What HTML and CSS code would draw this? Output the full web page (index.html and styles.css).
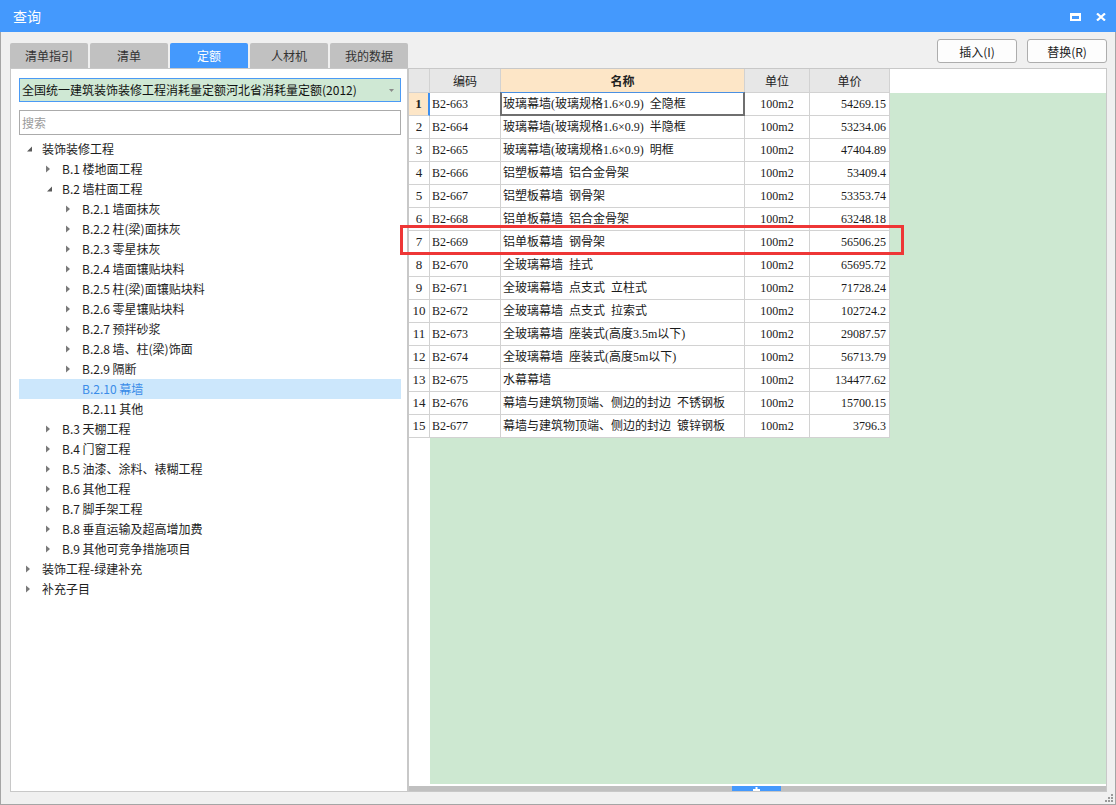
FILE: index.html
```html
<!DOCTYPE html>
<html lang="zh-CN">
<head>
<meta charset="utf-8">
<title>查询</title>
<link rel="stylesheet" href="styles.css">
</head>
<body>
<div class="window">
  <div class="titlebar">
    <span class="title">查询</span>
    <div class="title-controls">
      <svg class="ctl" width="11" height="8" viewBox="0 0 11 8"><path fill="#fff" fill-rule="evenodd" d="M0 0H11V8H0Z M2 3H9V6H2Z"/></svg>
      <svg class="ctl" width="10" height="8" viewBox="0 0 10 8"><path d="M1 0.5L9 7.5M9 0.5L1 7.5" stroke="#fff" stroke-width="2.2" fill="none"/></svg>
    </div>
  </div>
  <div class="content">
    <div class="left-col">
      <div class="tabs">
        <div class="tab">清单指引</div>
        <div class="tab">清单</div>
        <div class="tab active">定额</div>
        <div class="tab">人材机</div>
        <div class="tab">我的数据</div>
      </div>
      <div class="left-panel">
        <div class="select">
          <span>全国统一建筑装饰装修工程消耗量定额河北省消耗量定额(2012)</span>
          <svg width="5" height="3" viewBox="0 0 5 3"><path d="M0 0H5L2.5 3Z" fill="#8a8a8a"/></svg>
        </div>
        <div class="search">搜索</div>
        <ul class="tree">
          <li class="node l0"><span class="tg"><svg viewBox="0 0 6 8"><path class="ex" d="M6 1.5V6.5H1Z"/></svg></span>装饰装修工程</li>
          <li class="node l1"><span class="tg"><svg viewBox="0 0 6 8"><path class="co" d="M0 0.5L4 4L0 7.5Z"/></svg></span>B.1 楼地面工程</li>
          <li class="node l1"><span class="tg"><svg viewBox="0 0 6 8"><path class="ex" d="M6 1.5V6.5H1Z"/></svg></span>B.2 墙柱面工程</li>
          <li class="node l2"><span class="tg"><svg viewBox="0 0 6 8"><path class="co" d="M0 0.5L4 4L0 7.5Z"/></svg></span>B.2.1 墙面抹灰</li>
          <li class="node l2"><span class="tg"><svg viewBox="0 0 6 8"><path class="co" d="M0 0.5L4 4L0 7.5Z"/></svg></span>B.2.2 柱(梁)面抹灰</li>
          <li class="node l2"><span class="tg"><svg viewBox="0 0 6 8"><path class="co" d="M0 0.5L4 4L0 7.5Z"/></svg></span>B.2.3 零星抹灰</li>
          <li class="node l2"><span class="tg"><svg viewBox="0 0 6 8"><path class="co" d="M0 0.5L4 4L0 7.5Z"/></svg></span>B.2.4 墙面镶贴块料</li>
          <li class="node l2"><span class="tg"><svg viewBox="0 0 6 8"><path class="co" d="M0 0.5L4 4L0 7.5Z"/></svg></span>B.2.5 柱(梁)面镶贴块料</li>
          <li class="node l2"><span class="tg"><svg viewBox="0 0 6 8"><path class="co" d="M0 0.5L4 4L0 7.5Z"/></svg></span>B.2.6 零星镶贴块料</li>
          <li class="node l2"><span class="tg"><svg viewBox="0 0 6 8"><path class="co" d="M0 0.5L4 4L0 7.5Z"/></svg></span>B.2.7 预拌砂浆</li>
          <li class="node l2"><span class="tg"><svg viewBox="0 0 6 8"><path class="co" d="M0 0.5L4 4L0 7.5Z"/></svg></span>B.2.8 墙、柱(梁)饰面</li>
          <li class="node l2"><span class="tg"><svg viewBox="0 0 6 8"><path class="co" d="M0 0.5L4 4L0 7.5Z"/></svg></span>B.2.9 隔断</li>
          <li class="node l2 selected"><span class="tg"></span>B.2.10 幕墙</li>
          <li class="node l2"><span class="tg"></span>B.2.11 其他</li>
          <li class="node l1"><span class="tg"><svg viewBox="0 0 6 8"><path class="co" d="M0 0.5L4 4L0 7.5Z"/></svg></span>B.3 天棚工程</li>
          <li class="node l1"><span class="tg"><svg viewBox="0 0 6 8"><path class="co" d="M0 0.5L4 4L0 7.5Z"/></svg></span>B.4 门窗工程</li>
          <li class="node l1"><span class="tg"><svg viewBox="0 0 6 8"><path class="co" d="M0 0.5L4 4L0 7.5Z"/></svg></span>B.5 油漆、涂料、裱糊工程</li>
          <li class="node l1"><span class="tg"><svg viewBox="0 0 6 8"><path class="co" d="M0 0.5L4 4L0 7.5Z"/></svg></span>B.6 其他工程</li>
          <li class="node l1"><span class="tg"><svg viewBox="0 0 6 8"><path class="co" d="M0 0.5L4 4L0 7.5Z"/></svg></span>B.7 脚手架工程</li>
          <li class="node l1"><span class="tg"><svg viewBox="0 0 6 8"><path class="co" d="M0 0.5L4 4L0 7.5Z"/></svg></span>B.8 垂直运输及超高增加费</li>
          <li class="node l1"><span class="tg"><svg viewBox="0 0 6 8"><path class="co" d="M0 0.5L4 4L0 7.5Z"/></svg></span>B.9 其他可竞争措施项目</li>
          <li class="node l0"><span class="tg"><svg viewBox="0 0 6 8"><path class="co" d="M0 0.5L4 4L0 7.5Z"/></svg></span>装饰工程-绿建补充</li>
          <li class="node l0"><span class="tg"><svg viewBox="0 0 6 8"><path class="co" d="M0 0.5L4 4L0 7.5Z"/></svg></span>补充子目</li>
        </ul>
      </div>
    </div>
    <div class="right-col">
      <div class="actions">
        <button class="btn">插入(I)</button>
        <button class="btn">替换(R)</button>
      </div>
      <div class="grid-panel">
        <div class="grid">
          <div class="corner"></div>
          <div class="head-row">
            <div class="hc c-code">编码</div>
            <div class="hc c-name sorted">名称</div>
            <div class="hc c-unit">单位</div>
            <div class="hc c-price">单价</div>
            <div class="head-fill"></div>
          </div>
          <div class="rownums">
            <div class="rn active">1</div>
            <div class="rn">2</div>
            <div class="rn">3</div>
            <div class="rn">4</div>
            <div class="rn">5</div>
            <div class="rn">6</div>
            <div class="rn">7</div>
            <div class="rn">8</div>
            <div class="rn">9</div>
            <div class="rn">10</div>
            <div class="rn">11</div>
            <div class="rn">12</div>
            <div class="rn">13</div>
            <div class="rn">14</div>
            <div class="rn">15</div>
          </div>
          <div class="gbody">
            <div class="row"><div class="dc c-code">B2-663</div><div class="dc c-name focus">玻璃幕墙(玻璃规格1.6×0.9) 全隐框</div><div class="dc c-unit">100m2</div><div class="dc c-price">54269.15</div></div>
            <div class="row"><div class="dc c-code">B2-664</div><div class="dc c-name">玻璃幕墙(玻璃规格1.6×0.9) 半隐框</div><div class="dc c-unit">100m2</div><div class="dc c-price">53234.06</div></div>
            <div class="row"><div class="dc c-code">B2-665</div><div class="dc c-name">玻璃幕墙(玻璃规格1.6×0.9) 明框</div><div class="dc c-unit">100m2</div><div class="dc c-price">47404.89</div></div>
            <div class="row"><div class="dc c-code">B2-666</div><div class="dc c-name">铝塑板幕墙 铝合金骨架</div><div class="dc c-unit">100m2</div><div class="dc c-price">53409.4</div></div>
            <div class="row"><div class="dc c-code">B2-667</div><div class="dc c-name">铝塑板幕墙 钢骨架</div><div class="dc c-unit">100m2</div><div class="dc c-price">53353.74</div></div>
            <div class="row"><div class="dc c-code">B2-668</div><div class="dc c-name">铝单板幕墙 铝合金骨架</div><div class="dc c-unit">100m2</div><div class="dc c-price">63248.18</div></div>
            <div class="row"><div class="dc c-code">B2-669</div><div class="dc c-name">铝单板幕墙 钢骨架</div><div class="dc c-unit">100m2</div><div class="dc c-price">56506.25</div></div>
            <div class="row"><div class="dc c-code">B2-670</div><div class="dc c-name">全玻璃幕墙 挂式</div><div class="dc c-unit">100m2</div><div class="dc c-price">65695.72</div></div>
            <div class="row"><div class="dc c-code">B2-671</div><div class="dc c-name">全玻璃幕墙 点支式 立柱式</div><div class="dc c-unit">100m2</div><div class="dc c-price">71728.24</div></div>
            <div class="row"><div class="dc c-code">B2-672</div><div class="dc c-name">全玻璃幕墙 点支式 拉索式</div><div class="dc c-unit">100m2</div><div class="dc c-price">102724.2</div></div>
            <div class="row"><div class="dc c-code">B2-673</div><div class="dc c-name">全玻璃幕墙 座装式(高度3.5m以下)</div><div class="dc c-unit">100m2</div><div class="dc c-price">29087.57</div></div>
            <div class="row"><div class="dc c-code">B2-674</div><div class="dc c-name">全玻璃幕墙 座装式(高度5m以下)</div><div class="dc c-unit">100m2</div><div class="dc c-price">56713.79</div></div>
            <div class="row"><div class="dc c-code">B2-675</div><div class="dc c-name">水幕幕墙</div><div class="dc c-unit">100m2</div><div class="dc c-price">134477.62</div></div>
            <div class="row"><div class="dc c-code">B2-676</div><div class="dc c-name">幕墙与建筑物顶端、侧边的封边 不锈钢板</div><div class="dc c-unit">100m2</div><div class="dc c-price">15700.15</div></div>
            <div class="row"><div class="dc c-code">B2-677</div><div class="dc c-name">幕墙与建筑物顶端、侧边的封边 镀锌钢板</div><div class="dc c-unit">100m2</div><div class="dc c-price">3796.3</div></div>
          </div>
        </div>
        <div class="hscroll">
          <div class="thumb"><svg width="7" height="4" viewBox="0 0 7 4"><path d="M2.5 0H4.5L4.5 2H7V4H0V2H2.5Z" fill="#fff"/></svg></div>
        </div>
      </div>
    </div>
  </div>
  <div class="annot"></div>
  <svg class="grip" width="9" height="9" viewBox="0 0 9 9">
    <rect x="7" y="1" width="2" height="2" fill="#9a9a9a"/>
    <rect x="4" y="4" width="2" height="2" fill="#9a9a9a"/>
    <rect x="7" y="4" width="2" height="2" fill="#9a9a9a"/>
    <rect x="1" y="7" width="2" height="2" fill="#9a9a9a"/>
    <rect x="4" y="7" width="2" height="2" fill="#9a9a9a"/>
    <rect x="7" y="7" width="2" height="2" fill="#9a9a9a"/>
  </svg>
</div>
</body>
</html>
```

FILE: styles.css
```css
* { box-sizing: border-box; margin: 0; padding: 0; }
html, body { width: 1116px; height: 805px; overflow: hidden; }
body {
  font-family: "Noto Sans CJK SC", "Microsoft YaHei", sans-serif;
  font-size: 12px;
  color: #222;
  background: #f0f0f0;
}
.window {
  position: relative;
  width: 1116px;
  height: 805px;
  display: flex;
  flex-direction: column;
  background: #f0f0f0;
}
.titlebar {
  height: 32px;
  flex: none;
  background: #4499fd;
  display: flex;
  align-items: center;
  justify-content: space-between;
  padding: 0 10px 0 13px;
  color: #fff;
}
.title { font-size: 14px; line-height: 32px; }
.title-controls { display: flex; align-items: center; gap: 15px; padding-top: 1px; }
.ctl { display: block; }

.content {
  flex: 1;
  display: flex;
  border: 1px solid #a5a5a5;
  border-top: 0;
  padding: 0 8px 12px 9px;
  min-height: 0;
}

/* left column */
.left-col { width: 398px; flex: none; display: flex; flex-direction: column; }
.tabs { margin-top: 11px; height: 25px; display: flex; gap: 2px; }
.tab {
  width: 78px;
  height: 25px;
  background: #c1c1c1;
  color: #333;
  border-radius: 2px 2px 0 0;
  text-align: center;
  line-height: 25px;
  font-size: 12px;
}
.tab.active { background: #4499fd; color: #fff; }
.left-panel {
  flex: 1;
  background: #fff;
  border: 1px solid #c8c8c8;
  padding: 9px 6px 0 8px;
  min-height: 0;
}
.select {
  height: 24px;
  border: 1px solid #4a9af5;
  background: #cfe8d4;
  display: flex;
  align-items: center;
  justify-content: space-between;
  padding: 0 6px 0 2px;
  color: #111;
  line-height: 22px;
}
.select svg { display: block; }
.search {
  margin-top: 8px;
  height: 25px;
  border: 1px solid #ababab;
  padding-left: 2px;
  line-height: 23px;
  color: #9b9b9b;
}
.tree { list-style: none; margin-top: 4px; }
.node {
  height: 20px;
  line-height: 20px;
  display: flex;
  align-items: center;
  color: #1e1e1e;
  white-space: nowrap;
}
.node.l1 { padding-left: 20px; }
.node.l2 { padding-left: 40px; }
.node.selected { background: #cce7fc; color: #3a8ce8; }
.tg { width: 23px; height: 20px; flex: none; display: flex; align-items: center; }
.tg svg { width: 6px; height: 8px; margin-left: 7px; display: block; }
.tg .ex { fill: #5a5a5a; }
.tg .co { fill: #7a7a7a; }

/* right column */
.right-col { width: 699px; flex: none; display: flex; flex-direction: column; }
.actions {
  margin-top: 7px;
  height: 24px;
  margin-bottom: 5px;
  display: flex;
  justify-content: flex-end;
  gap: 10px;
}
.btn {
  width: 80px;
  height: 24px;
  background: #fdfdfd;
  border: 1px solid #adadad;
  border-radius: 3px;
  font-family: "Noto Sans CJK SC", sans-serif;
  font-size: 12px;
  color: #222;
}
.grid-panel {
  flex: 1;
  display: flex;
  flex-direction: column;
  border: 1px solid #c8c8c8;
  background: #fff;
  min-height: 0;
}
.grid {
  flex: 1;
  display: grid;
  grid-template-columns: 21px 1fr;
  grid-template-rows: 24px 1fr;
  min-height: 0;
}
.corner {
  background: #e7e7e7;
  border-right: 1px solid #d2d2d2;
  border-bottom: 1px solid #d2d2d2;
}
.head-row { display: flex; height: 24px; }
.hc {
  height: 24px;
  line-height: 23px;
  text-align: center;
  background: #e7e7e7;
  border-right: 1px solid #d2d2d2;
  border-bottom: 1px solid #d2d2d2;
  color: #222;
  flex: none;
}
.hc.sorted { background: #fde6c7; font-weight: bold; }
.head-fill { flex: 1; background: #fff; }
.c-code { width: 71px; }
.c-name { width: 244px; }
.c-unit { width: 65px; }
.c-price { width: 80px; }

.rownums { background: #fff; }
.rn {
  height: 23px;
  line-height: 22px;
  text-align: center;
  border-right: 1px solid #d2d2d2;
  border-bottom: 1px solid #d2d2d2;
  font-family: "Liberation Serif", serif;
  font-size: 13px;
  color: #222;
}
.rn.active { background: #fde6c7; font-weight: bold; border-right: 2px solid #3d8ff0; }

.gbody { background: #cde8d1; margin-bottom: 2px; }
.row { display: flex; height: 23px; }
.dc {
  height: 23px;
  line-height: 22px;
  background: #fff;
  border-right: 1px solid #d2d2d2;
  border-bottom: 1px solid #d2d2d2;
  font-family: "Liberation Serif", "Noto Sans CJK SC", serif;
  font-size: 12px;
  word-spacing: 3px;
  color: #1a1a1a;
  white-space: nowrap;
  overflow: hidden;
  flex: none;
}
.dc.c-code { padding-left: 2px; }
.dc.c-name { padding-left: 2px; }
.dc.c-unit { text-align: center; }
.dc.c-price { text-align: right; padding-right: 3px; }
.dc.focus { position: relative; overflow: visible; }
.dc.focus::after {
  content: "";
  position: absolute;
  left: -1px;
  top: -1px;
  right: -1px;
  bottom: -1px;
  border: 2px solid #6f6f6f;
  border-top: 1px solid #4a90e2;
}

.hscroll {
  height: 5px;
  flex: none;
  background: #c0c0c0;
  display: flex;
  padding-left: 323px;
}
.thumb {
  width: 49px;
  height: 5px;
  background: #4499fd;
  display: flex;
  align-items: center;
  justify-content: center;
}
.thumb svg { display: block; }

/* overlays */
.annot {
  position: absolute;
  left: 400px;
  top: 225px;
  width: 504px;
  height: 30px;
  border: 3px solid #ee3636;
}
.grip { position: absolute; right: 3px; bottom: 3px; }
```
